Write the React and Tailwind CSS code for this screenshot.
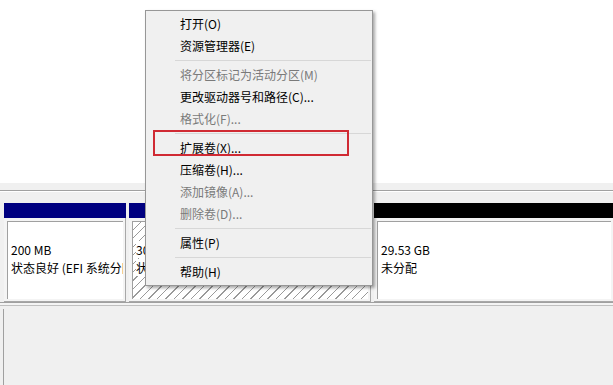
import React from "react";

const font = { fontFamily: '"Noto Sans CJK SC", "Noto Sans", sans-serif' };

const menuItems = [
  { label: "打开(O)" },
  { label: "资源管理器(E)" },
  { sep: true },
  { label: "将分区标记为活动分区(M)", disabled: true },
  { label: "更改驱动器号和路径(C)..." },
  { label: "格式化(F)...", disabled: true },
  { sep: true },
  { label: "扩展卷(X)...", marked: true },
  { label: "压缩卷(H)..." },
  { label: "添加镜像(A)...", disabled: true },
  { label: "删除卷(D)...", disabled: true },
  { sep: true },
  { label: "属性(P)" },
  { sep: true },
  { label: "帮助(H)" },
];

// one partition block in the disk row
const Partition = ({ width, bar, hatched, lines }) => (
  <div className="flex flex-col shrink-0" style={{ width }}>
    <div className={`h-[15px] ${bar}`} />
    <div className="h-[84px] bg-[#f4f4f4] border-r border-b border-[#a8a8a8] p-[3px] pr-[2px] pb-[2px]">
      <div
        className={`h-full border-l border-t border-[#a0a0a0] pl-[3px] pt-[19px] text-[12px] leading-[18px] text-black overflow-hidden whitespace-nowrap ${
          hatched
            ? "bg-[repeating-linear-gradient(135deg,#ffffff_0px,#ffffff_5px,#9a9a9a_5px,#9a9a9a_6px)]"
            : "bg-white"
        }`}
      >
        {lines.map((l) => (
          <div key={l}>
            <span className={hatched ? "bg-white" : ""}>{l}</span>
          </div>
        ))}
      </div>
    </div>
  </div>
);

export default function App() {
  return (
    <div className="relative w-[613px] h-[385px] overflow-hidden bg-[#f0f0f0]" style={font}>
      <div className="h-[183px] bg-white" />
      <div className="h-[7px] bg-[#f0f0f0]" />
      <div className="h-px bg-[#a0a0a0]" />
      <div className="h-px bg-white" />

      {/* disk row */}
      <div className="flex h-[110px] pl-[3px]">
        <div className="w-px bg-[#a0a0a0] mt-[5px]" />
        <div className="flex gap-[3px] pt-[11px] pl-px">
          <Partition width={122} bar="bg-[#000080]" lines={["200 MB", "状态良好 (EFI 系统分区)"]} />
          <Partition width={242} bar="bg-[#000080]" hatched lines={["300.00 GB NTFS", "状态良好 (启动, 页面文件)"]} />
          <Partition width={240} bar="bg-black" lines={["29.53 GB", "未分配"]} />
        </div>
      </div>

      <div className="h-px bg-[#a0a0a0]" />
      <div className="h-[2px] bg-[#f4f4f4]" />
      <div className="h-px bg-[#c0c0c0]" />
      <div className="flex h-[80px] pl-[3px] pt-[3px]">
        <div className="w-px bg-[#a0a0a0]" />
      </div>

      {/* context menu */}
      <div className="absolute left-[145px] top-[10px] w-[228px] bg-[#f0f0f0] border border-[#979797] py-[2px] shadow-[2px_2px_3px_rgba(0,0,0,0.35)]">
        {menuItems.map((it, i) =>
          it.sep ? (
            <div key={i} className="h-[7px] flex items-center pl-[29px] pr-px">
              <div className="h-px w-full bg-[#d7d7d7]" />
            </div>
          ) : (
            <div
              key={i}
              className={`relative h-[22px] flex items-center pl-[34px] text-[12px] ${
                it.disabled ? "text-[#7a7a7a]" : "text-black"
              }`}
            >
              {it.label}
              {it.marked && (
                <div className="absolute left-[7px] top-[-7px] w-[196px] h-[26px] border-2 border-[#d02a33]" />
              )}
            </div>
          )
        )}
      </div>
    </div>
  );
}
